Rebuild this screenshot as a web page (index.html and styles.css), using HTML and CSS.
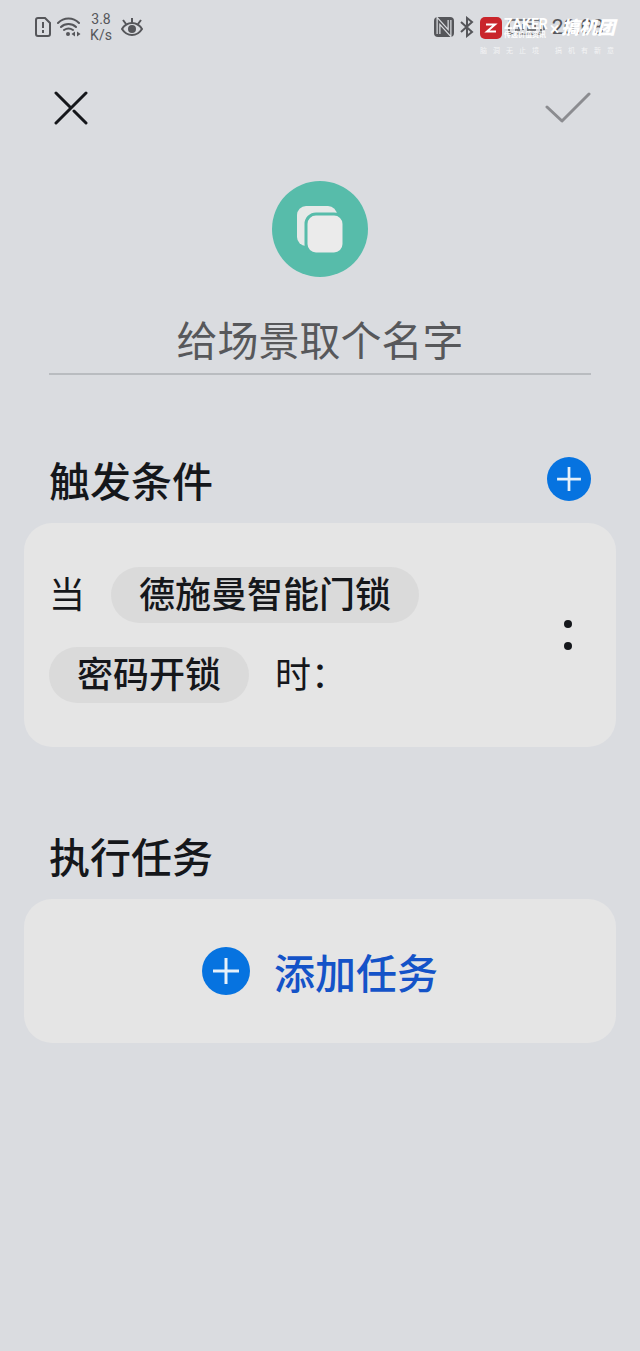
FILE: index.html
```
<!DOCTYPE html>
<html lang="zh-CN">
<head>
  <meta charset="UTF-8" />
  <meta name="viewport" content="width=device-width, initial-scale=1.0"/>
  <title>创建场景</title>
  <link rel="stylesheet" href="styles.css">
</head>
<body>

  <div class="status-bar">
    <div class="status-left">
      <svg class="icon-sim" width="16" height="20" viewBox="0 0 16 20" fill="none" stroke="#55565a" stroke-width="2">
        <path d="M3 1h7l5 5v11a2 2 0 0 1-2 2H3a2 2 0 0 1-2-2V3a2 2 0 0 1 2-2z"/>
        <path d="M8 5v6M8 13v3"/>
      </svg>
      <svg class="icon-wifi" width="24" height="20" viewBox="0 0 24 20" fill="none" stroke="#55565a" stroke-width="2" stroke-linecap="round">
        <path d="M1 6c6-6 15-6 21 0M4 10c4-4 11-4 15 0M7 13c3-2 6-2 9 0"/>
        <circle cx="11" cy="17" r="2" fill="#55565a" stroke="none"/>
        <path d="M18 14.500v5l-3.500-2.500zM20 14.500v5l3.500-2.500z" fill="#55565a" stroke="none"/>
      </svg>
      <span class="speed">3.8<br>K/s</span>
      <svg class="icon-eye" width="22" height="20" viewBox="0 0 22 20" fill="none" stroke="#55565a" stroke-width="2">
        <path d="M1 12c5-8 15-8 20 0-5 8-15 8-20 0z"/>
        <circle cx="11" cy="12" r="4" fill="#55565a" stroke="none"/>
        <path d="M11 6V1M5 7L2 3M17 7l3-4"/>
      </svg>
    </div>
    <div class="status-right">
      <svg width="20" height="20" viewBox="0 0 20 20">
        <rect width="20" height="20" rx="4" fill="#55565a"/>
        <path d="M4.500 17V4L15.500 16V3" fill="none" stroke="#dadce0" stroke-width="4"/>
        <path d="M4.500 17V4L15.500 16V3" fill="none" stroke="#55565a" stroke-width="1.500"/>
      </svg>
      <svg class="icon-bluetooth" width="14" height="22" viewBox="0 0 14 22" fill="none" stroke="#55565a" stroke-width="2">
        <path d="M1 6l11 10-5 4V2l5 4L1 16"/>
      </svg>
      <svg class="icon-battery" width="38" height="16" viewBox="0 0 38 16" fill="none" stroke="#77787c" stroke-width="2">
        <rect x="1" y="1" width="32" height="14" rx="3"/>
        <path d="M36 5v6M7 5h4v6H7M15 5v6M20 5h7v6h-7z"/>
      </svg>
      <span class="clock">20:08</span>
    </div>
    <div class="watermark">
      <div class="brands">
        <svg width="22" height="22" viewBox="0 0 22 22">
          <rect width="22" height="22" rx="5" fill="#c9252b"/>
          <path d="M6 7.500h9L7 14.500h9" fill="none" stroke="#fff" stroke-width="2"/>
        </svg>
        <span class="zaker">ZAKER<small>传递价值资讯</small></span>
        <span class="times">×</span>
        <span class="group">搞机团</span>
      </div>
      <div class="slogan"><span>脑洞无止境</span><span>搞机有新意</span></div>
    </div>
  </div>

  <header>
    <button class="icon-button" aria-label="关闭">
      <svg width="34" height="34" viewBox="0 0 34 34" fill="none" stroke="#15171b" stroke-width="3" stroke-linecap="round">
        <path d="M2 32L32 2M2 2l14 14M20 20l12 12"/>
      </svg>
    </button>
    <button class="icon-button" aria-label="完成">
      <svg width="46" height="32" viewBox="0 0 46 32" fill="none" stroke="#8b8c90" stroke-width="3" stroke-linecap="round" stroke-linejoin="round">
        <path d="M2 15l15 14L44 2"/>
      </svg>
    </button>
  </header>

  <main>
    <div class="scene">
      <svg class="scene-icon" width="96" height="96" viewBox="0 0 96 96">
        <circle cx="48" cy="48" r="48" fill="#57bcaa"/>
        <rect x="25" y="25" width="40" height="40" rx="9" fill="#e6e9e8"/>
        <rect x="34" y="33" width="38" height="40" rx="10" fill="#ebebeb" stroke="#57bcaa" stroke-width="3"/>
      </svg>
      <input class="scene-name" type="text" placeholder="给场景取个名字" aria-label="场景名字">
    </div>

    <section>
      <div class="section-title">
        <h2>触发条件</h2>
        <button class="add-button" aria-label="添加条件">
          <svg width="44" height="44" viewBox="0 0 48 48">
            <circle cx="24" cy="24" r="24" fill="#0673e0"/>
            <path d="M11 24h26M24 11v26" stroke="#e6f1fa" stroke-width="3"/>
          </svg>
        </button>
      </div>
      <div class="card condition">
        <div class="condition-text">
          <div class="line"><span>当</span><button class="chip">德施曼智能门锁</button></div>
          <div class="line"><button class="chip">密码开锁</button><span>时：</span></div>
        </div>
        <button class="more" aria-label="更多">
          <svg width="8" height="30" viewBox="0 0 8 30" fill="#15171b">
            <circle cx="4" cy="4" r="4"/>
            <circle cx="4" cy="26" r="4"/>
          </svg>
        </button>
      </div>
    </section>

    <section>
      <div class="section-title">
        <h2>执行任务</h2>
      </div>
      <button class="card add-task">
        <svg width="48" height="48" viewBox="0 0 48 48">
          <circle cx="24" cy="24" r="24" fill="#0673e0"/>
          <path d="M11 24h26M24 11v26" stroke="#e6f1fa" stroke-width="3"/>
        </svg>
        <span>添加任务</span>
      </button>
    </section>
  </main>

</body>
</html>
```
FILE: styles.css
```
* {
  box-sizing: border-box;
}
body {
  margin: 0;
  font-family: Roboto, "Noto Sans CJK SC", sans-serif;
  background-color: #dadce0;
  color: #15171b;
}
button {
  padding: 0;
  border: none;
  background: none;
  color: inherit;
  font-family: inherit;
  cursor: pointer;
}
svg {
  display: block;
  flex: none;
}
.status-bar {
  position: relative;
  display: flex;
  justify-content: space-between;
  height: 56px;
  padding: 0 36px 0 35px;
  color: #55565a;
}
.status-left,
.status-right {
  display: flex;
  align-items: center;
  gap: 6px;
  height: 54px;
}
.icon-battery {
  margin-left: 28px;
}
.speed {
  width: 28px;
  font-size: 14px;
  line-height: 16px;
  text-align: center;
}
.clock {
  font-size: 21px;
}
/* brand mark lies over the status icons */
.watermark {
  position: absolute;
  top: 17px;
  right: 20px;
  width: 140px;
  color: white;
}
.brands {
  display: flex;
  align-items: center;
  gap: 2px;
  height: 22px;
}
.zaker {
  font-size: 14px;
  line-height: 13px;
  font-weight: bold;
}
.zaker small {
  display: block;
  font-size: 7px;
  line-height: 8px;
}
.times {
  font-size: 18px;
}
.group {
  font-size: 18px;
  font-weight: 900;
  font-style: italic;
  line-height: 22px;
}
.slogan {
  display: flex;
  justify-content: space-between;
  margin-top: 7px;
  font-size: 7px;
  line-height: 10px;
  letter-spacing: 6px;
  opacity: 0.7;
}
header {
  display: flex;
  justify-content: space-between;
  align-items: center;
  height: 104px;
  padding: 0 49px 0 54px;
}
.scene {
  display: flex;
  flex-direction: column;
  align-items: center;
  padding: 21px 49px 0;
}
.scene-name {
  width: 100%;
  height: 66px;
  margin-top: 32px;
  padding: 2px 0 0;
  border: none;
  border-bottom: 2px solid #b9bcc0;
  border-radius: 0;
  background: none;
  color: #15171b;
  font-family: inherit;
  font-size: 41px;
  text-align: center;
}
.scene-name::placeholder {
  color: #57585b;
  opacity: 1;
}
section {
  margin-top: 60px;
  padding: 0 24px;
}
section + section {
  margin-top: 64px;
}
.section-title {
  display: flex;
  justify-content: space-between;
  align-items: center;
  height: 88px;
  padding: 0 25px;
}
h2 {
  margin: 0;
  padding-top: 8px;
  font-size: 41px;
  font-weight: 500;
  line-height: 60px;
}
.card {
  border-radius: 28px;
  background-color: #e5e5e5;
}
.condition {
  display: flex;
  justify-content: space-between;
  align-items: center;
  padding: 44px;
  padding-left: 25px;
}
.condition-text {
  display: flex;
  flex-direction: column;
  gap: 24px;
}
.line {
  display: flex;
  align-items: center;
  gap: 26px;
  font-size: 36px;
  line-height: 56px;
}
.line span {
  padding-top: 2px;
  line-height: 54px;
}
.chip {
  padding: 2px 28px 0;
  border-radius: 28px;
  background-color: #dadada;
  font-size: 36px;
  font-weight: 500;
  line-height: 54px;
}
.add-task {
  display: flex;
  justify-content: center;
  align-items: center;
  gap: 24px;
  width: 100%;
  height: 144px;
  color: #1453c8;
  font-size: 41px;
  font-weight: 500;
}
```
